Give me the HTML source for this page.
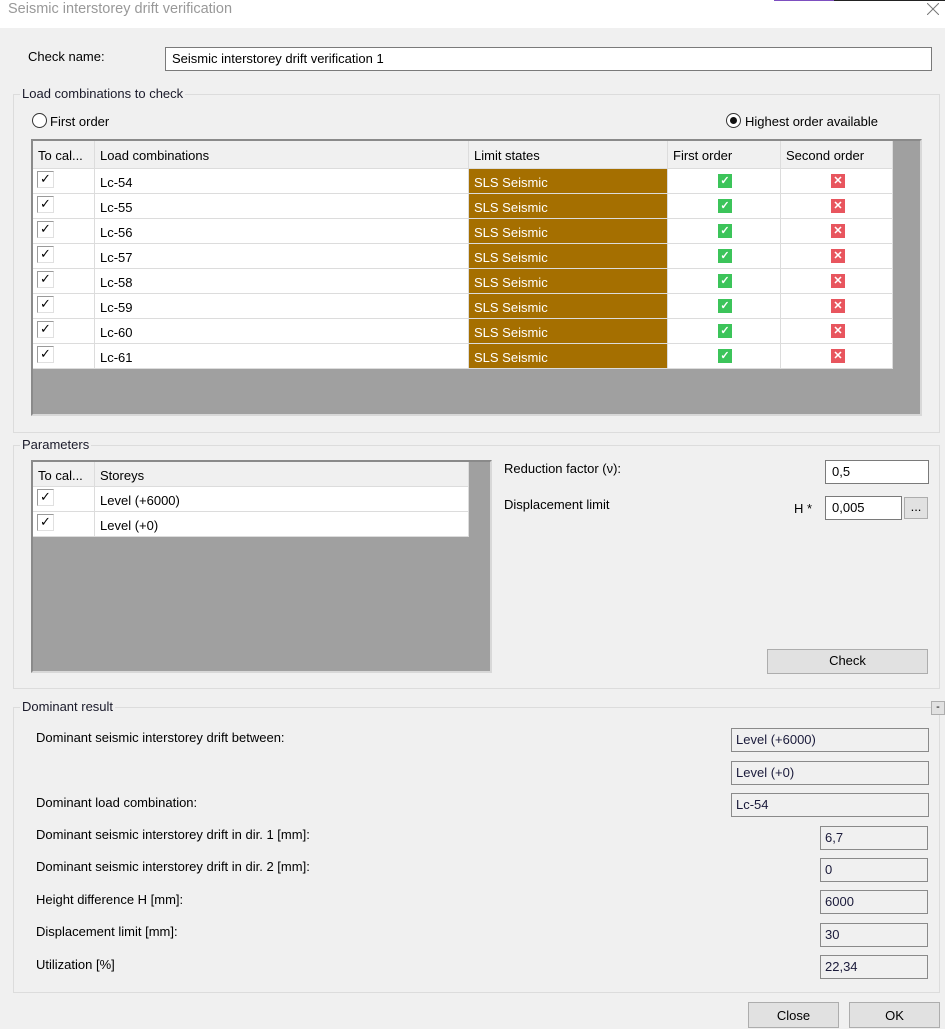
<!DOCTYPE html>
<html><head><meta charset="utf-8"><style>
*{box-sizing:border-box;margin:0;padding:0}
body{width:945px;height:1024px;background:#f0f0f0;font-family:"Liberation Sans",sans-serif;font-size:13px;color:#000;position:relative;overflow:hidden}
.a{position:absolute}
.t{position:absolute;white-space:nowrap;line-height:16px}
.grp{position:absolute;border:1px solid #dcdcdc}
.lg{position:absolute;background:#f0f0f0;padding:0 2px;line-height:14px;top:-8px;left:6px;color:#1a1a2a}
.inp{position:absolute;background:#fff;border:1px solid #7a7a7a;line-height:22px;padding-left:6px;white-space:nowrap}
.ro{position:absolute;background:#f0f0f0;border:1px solid #8a8a8a;line-height:22px;padding-left:4px;white-space:nowrap;color:#1a1a3a}
.btn{position:absolute;background:#e1e1e1;border:1px solid #adadad;text-align:center;line-height:22px}
.cell{position:absolute;border-right:1px solid #dcdcdc;border-bottom:1px solid #dcdcdc;line-height:27px;padding-left:5px;white-space:nowrap;overflow:hidden}
.cb{position:absolute;width:17px;height:17px;border:1px solid #9a9a9a;border-right-color:#e0e0e0;border-bottom-color:#e0e0e0;background:#fff;font-size:13px;line-height:14px;text-align:center}
.ok{position:absolute;width:14px;height:14px;background:#3cc45a;color:#fff;font-size:11px;line-height:14px;text-align:center;font-weight:bold}
.x{position:absolute;width:14px;height:14px;background:#e8555e;color:#fff;font-size:11px;line-height:14px;text-align:center;font-weight:bold}
</style></head><body>
<div class="a" style="left:0;top:0;width:945px;height:28px;background:#fff"></div>
<div class="t" style="left:8px;top:0px;font-size:14.5px;color:#999;line-height:18px">Seismic interstorey drift verification</div>
<div class="a" style="left:774px;top:0;width:60px;height:1px;background:#7d4fc0"></div>
<div class="a" style="left:834px;top:0;width:111px;height:1px;background:#222"></div>
<svg class="a" style="left:927px;top:3px" width="12" height="12"><path d="M0 0L12 12M12 0L0 12" stroke="#777" stroke-width="1"/></svg>

<div class="t" style="left:28px;top:49px">Check name:</div>
<div class="inp" style="left:165px;top:47px;width:767px;height:24px">Seismic interstorey drift verification 1</div>

<div class="grp" style="left:13px;top:94px;width:927px;height:339px"><div class="lg">Load combinations to check</div></div>
<div class="a" style="left:32px;top:113px;width:15px;height:15px;border:1px solid #333;border-radius:50%;background:#fff"></div>
<div class="t" style="left:50px;top:114px">First order</div>
<div class="a" style="left:726px;top:113px;width:15px;height:15px;border:1px solid #333;border-radius:50%;background:#fff"></div>
<div class="a" style="left:730px;top:117px;width:7px;height:7px;border-radius:50%;background:#111"></div>
<div class="t" style="left:745px;top:114px">Highest order available</div>

<div class="a" style="left:31px;top:139px;width:891px;height:277px;background:#a0a0a0;border:2px solid #8a8a8a;border-right-color:#d8d8d8;border-bottom-color:#d8d8d8"></div>
<div class="a" style="left:33px;top:141px;width:860px;height:28px;background:#f0f0f0"></div>
<div class="cell" style="left:33px;top:141px;width:62px;height:28px;line-height:30px">To cal...</div>
<div class="cell" style="left:95px;top:141px;width:374px;height:28px;line-height:30px">Load combinations</div>
<div class="cell" style="left:469px;top:141px;width:199px;height:28px;line-height:30px">Limit states</div>
<div class="cell" style="left:668px;top:141px;width:113px;height:28px;line-height:30px">First order</div>
<div class="cell" style="left:781px;top:141px;width:112px;height:28px;line-height:30px">Second order</div>

<div class="a" style="left:33px;top:169px;width:860px;height:200px;background:#fff"></div>
<div class="a" style="left:469px;top:169px;width:199px;height:200px;background:#a56f00"></div>

<div class="cell" style="left:33px;top:169px;width:62px;height:25px"></div><div class="cell" style="left:95px;top:169px;width:374px;height:25px">Lc-54</div><div class="cell" style="left:469px;top:169px;width:199px;height:25px;color:#fff">SLS Seismic</div><div class="cell" style="left:668px;top:169px;width:113px;height:25px"></div><div class="cell" style="left:781px;top:169px;width:112px;height:25px"></div>
<div class="cell" style="left:33px;top:194px;width:62px;height:25px"></div><div class="cell" style="left:95px;top:194px;width:374px;height:25px">Lc-55</div><div class="cell" style="left:469px;top:194px;width:199px;height:25px;color:#fff">SLS Seismic</div><div class="cell" style="left:668px;top:194px;width:113px;height:25px"></div><div class="cell" style="left:781px;top:194px;width:112px;height:25px"></div>
<div class="cell" style="left:33px;top:219px;width:62px;height:25px"></div><div class="cell" style="left:95px;top:219px;width:374px;height:25px">Lc-56</div><div class="cell" style="left:469px;top:219px;width:199px;height:25px;color:#fff">SLS Seismic</div><div class="cell" style="left:668px;top:219px;width:113px;height:25px"></div><div class="cell" style="left:781px;top:219px;width:112px;height:25px"></div>
<div class="cell" style="left:33px;top:244px;width:62px;height:25px"></div><div class="cell" style="left:95px;top:244px;width:374px;height:25px">Lc-57</div><div class="cell" style="left:469px;top:244px;width:199px;height:25px;color:#fff">SLS Seismic</div><div class="cell" style="left:668px;top:244px;width:113px;height:25px"></div><div class="cell" style="left:781px;top:244px;width:112px;height:25px"></div>
<div class="cell" style="left:33px;top:269px;width:62px;height:25px"></div><div class="cell" style="left:95px;top:269px;width:374px;height:25px">Lc-58</div><div class="cell" style="left:469px;top:269px;width:199px;height:25px;color:#fff">SLS Seismic</div><div class="cell" style="left:668px;top:269px;width:113px;height:25px"></div><div class="cell" style="left:781px;top:269px;width:112px;height:25px"></div>
<div class="cell" style="left:33px;top:294px;width:62px;height:25px"></div><div class="cell" style="left:95px;top:294px;width:374px;height:25px">Lc-59</div><div class="cell" style="left:469px;top:294px;width:199px;height:25px;color:#fff">SLS Seismic</div><div class="cell" style="left:668px;top:294px;width:113px;height:25px"></div><div class="cell" style="left:781px;top:294px;width:112px;height:25px"></div>
<div class="cell" style="left:33px;top:319px;width:62px;height:25px"></div><div class="cell" style="left:95px;top:319px;width:374px;height:25px">Lc-60</div><div class="cell" style="left:469px;top:319px;width:199px;height:25px;color:#fff">SLS Seismic</div><div class="cell" style="left:668px;top:319px;width:113px;height:25px"></div><div class="cell" style="left:781px;top:319px;width:112px;height:25px"></div>
<div class="cell" style="left:33px;top:344px;width:62px;height:25px"></div><div class="cell" style="left:95px;top:344px;width:374px;height:25px">Lc-61</div><div class="cell" style="left:469px;top:344px;width:199px;height:25px;color:#fff">SLS Seismic</div><div class="cell" style="left:668px;top:344px;width:113px;height:25px"></div><div class="cell" style="left:781px;top:344px;width:112px;height:25px"></div>

<div class="cb" style="left:37px;top:171px">✓</div><div class="ok" style="left:718px;top:174px">✓</div><div class="x" style="left:831px;top:174px">✕</div>
<div class="cb" style="left:37px;top:196px">✓</div><div class="ok" style="left:718px;top:199px">✓</div><div class="x" style="left:831px;top:199px">✕</div>
<div class="cb" style="left:37px;top:221px">✓</div><div class="ok" style="left:718px;top:224px">✓</div><div class="x" style="left:831px;top:224px">✕</div>
<div class="cb" style="left:37px;top:246px">✓</div><div class="ok" style="left:718px;top:249px">✓</div><div class="x" style="left:831px;top:249px">✕</div>
<div class="cb" style="left:37px;top:271px">✓</div><div class="ok" style="left:718px;top:274px">✓</div><div class="x" style="left:831px;top:274px">✕</div>
<div class="cb" style="left:37px;top:296px">✓</div><div class="ok" style="left:718px;top:299px">✓</div><div class="x" style="left:831px;top:299px">✕</div>
<div class="cb" style="left:37px;top:321px">✓</div><div class="ok" style="left:718px;top:324px">✓</div><div class="x" style="left:831px;top:324px">✕</div>
<div class="cb" style="left:37px;top:346px">✓</div><div class="ok" style="left:718px;top:349px">✓</div><div class="x" style="left:831px;top:349px">✕</div>

<div class="grp" style="left:13px;top:445px;width:927px;height:244px"><div class="lg">Parameters</div></div>
<div class="a" style="left:31px;top:460px;width:461px;height:213px;background:#a0a0a0;border:2px solid #8a8a8a;border-right-color:#d8d8d8;border-bottom-color:#d8d8d8"></div>
<div class="a" style="left:33px;top:462px;width:436px;height:25px;background:#f0f0f0"></div>
<div class="cell" style="left:33px;top:462px;width:62px;height:25px">To cal...</div>
<div class="cell" style="left:95px;top:462px;width:374px;height:25px">Storeys</div>
<div class="a" style="left:33px;top:487px;width:436px;height:50px;background:#fff"></div>
<div class="cell" style="left:33px;top:487px;width:62px;height:25px"></div><div class="cell" style="left:95px;top:487px;width:374px;height:25px">Level (+6000)</div>
<div class="cell" style="left:33px;top:512px;width:62px;height:25px"></div><div class="cell" style="left:95px;top:512px;width:374px;height:25px">Level (+0)</div>
<div class="cb" style="left:37px;top:489px">✓</div>
<div class="cb" style="left:37px;top:514px">✓</div>

<div class="t" style="left:504px;top:461px">Reduction factor (ν):</div>
<div class="inp" style="left:825px;top:460px;width:104px;height:24px">0,5</div>
<div class="t" style="left:504px;top:497px">Displacement limit</div>
<div class="t" style="left:794px;top:501px">H *</div>
<div class="inp" style="left:825px;top:496px;width:77px;height:24px">0,005</div>
<div class="btn" style="left:904px;top:497px;width:24px;height:22px;line-height:18px">...</div>
<div class="btn" style="left:767px;top:649px;width:161px;height:25px">Check</div>

<div class="grp" style="left:13px;top:707px;width:927px;height:286px"><div class="lg">Dominant result</div></div>
<div class="btn" style="left:931px;top:701px;width:14px;height:14px;line-height:10px;font-size:11px">-</div>
<div class="t" style="left:36px;top:730px">Dominant seismic interstorey drift between:</div>
<div class="ro" style="left:731px;top:728px;width:198px;height:24px">Level (+6000)</div>
<div class="ro" style="left:731px;top:761px;width:198px;height:24px">Level (+0)</div>
<div class="t" style="left:36px;top:795px">Dominant load combination:</div>
<div class="ro" style="left:731px;top:793px;width:198px;height:24px">Lc-54</div>
<div class="t" style="left:36px;top:827px">Dominant seismic interstorey drift in dir. 1 [mm]:</div>
<div class="ro" style="left:820px;top:826px;width:108px;height:24px">6,7</div>
<div class="t" style="left:36px;top:859px">Dominant seismic interstorey drift in dir. 2 [mm]:</div>
<div class="ro" style="left:820px;top:858px;width:108px;height:24px">0</div>
<div class="t" style="left:36px;top:892px">Height difference H [mm]:</div>
<div class="ro" style="left:820px;top:890px;width:108px;height:24px">6000</div>
<div class="t" style="left:36px;top:924px">Displacement limit [mm]:</div>
<div class="ro" style="left:820px;top:923px;width:108px;height:24px">30</div>
<div class="t" style="left:36px;top:957px">Utilization [%]</div>
<div class="ro" style="left:820px;top:955px;width:108px;height:24px">22,34</div>

<div class="btn" style="left:748px;top:1002px;width:91px;height:26px;line-height:26px">Close</div>
<div class="btn" style="left:849px;top:1002px;width:91px;height:26px;line-height:26px">OK</div>
</body></html>
